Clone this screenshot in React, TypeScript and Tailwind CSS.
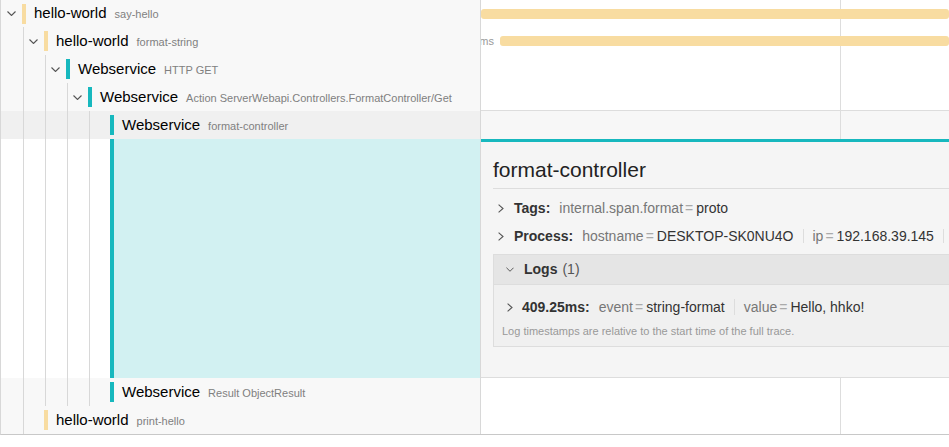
import React from "react";

type SpanRow = {
  depth: number;
  service: string;
  operation: string;
  accent: string;
  hasChildren: boolean;
  selected?: boolean;
  height?: string;
  bar?: { offset: number; label?: string };
};

const spans: SpanRow[] = [
  { depth: 0, service: "hello-world", operation: "say-hello", accent: "bg-[#f8dca1]", hasChildren: true, height: "h-[27px]", bar: { offset: 0 } },
  { depth: 1, service: "hello-world", operation: "format-string", accent: "bg-[#f8dca1]", hasChildren: true, bar: { offset: 19, label: "409.37ms" } },
  { depth: 2, service: "Webservice", operation: "HTTP GET", accent: "bg-[#17b8be]", hasChildren: true },
  { depth: 3, service: "Webservice", operation: "Action ServerWebapi.Controllers.FormatController/Get", accent: "bg-[#17b8be]", hasChildren: true },
  { depth: 4, service: "Webservice", operation: "format-controller", accent: "bg-[#17b8be]", hasChildren: false, selected: true },
];

const after: SpanRow[] = [
  { depth: 4, service: "Webservice", operation: "Result ObjectResult", accent: "bg-[#17b8be]", hasChildren: false },
  { depth: 1, service: "hello-world", operation: "print-hello", accent: "bg-[#f8dca1]", hasChildren: false },
];

function ChevronDown({ className = "" }: { className?: string }) {
  return (
    <svg width="9" height="5" viewBox="0 0 9 5" className={`shrink-0 ${className}`} aria-hidden="true">
      <polyline points="0.5,0.5 4.5,4.5 8.5,0.5" fill="none" stroke="#555" strokeWidth="1.1" />
    </svg>
  );
}

function ChevronRight() {
  return (
    <svg width="6" height="9" viewBox="0 0 6 9" className="shrink-0" aria-hidden="true">
      <polyline points="0.6,0.6 5,4.5 0.6,8.4" fill="none" stroke="#555" strokeWidth="1.1" />
    </svg>
  );
}

function IndentGuides({ count }: { count: number }) {
  return (
    <>
      {Array.from({ length: count }).map((_, i) => (
        <span key={i} className="flex w-[22px] shrink-0 justify-end self-stretch">
          <span className="w-px bg-[#d8d8d8]" />
        </span>
      ))}
    </>
  );
}

function Row({ span }: { span: SpanRow }) {
  return (
    <div className={`flex ${span.height ?? "h-7"}`}>
      {/* name column */}
      <div
        className={`flex w-[480px] shrink-0 items-center border-r border-[#d8d8d8] pl-px ${
          span.selected ? "bg-[#f0f0f0]" : "bg-[#f8f8f8]"
        }`}
      >
        <IndentGuides count={span.depth} />
        <span className="flex w-5 shrink-0 items-center pl-[5px]">
          {span.hasChildren && <ChevronDown />}
        </span>
        <span className={`h-5 w-1 shrink-0 ${span.accent}`} />
        <span className="ml-2 flex items-baseline whitespace-nowrap">
          <span className="text-[15px] text-black">{span.service}</span>
          <span className="ml-2 text-[11px] text-[#808080]">{span.operation}</span>
        </span>
      </div>

      {/* timeline column */}
      <div
        className={`relative flex flex-1 items-center overflow-hidden ${
          span.selected ? "bg-[#f7f7f7] shadow-[0_-1px_0_#dddddd]" : "bg-white"
        }`}
      >
        <span className="absolute inset-y-0 left-[359px] w-px bg-[#dddddd]" />
        {span.bar && (
          <div
            className="relative h-[10px] flex-1 rounded-[3px] bg-[#f8dca1]"
            style={{ marginLeft: span.bar.offset }}
          >
            {span.bar.label && (
              <span className="absolute right-full top-1/2 mr-[6px] -translate-y-1/2 whitespace-nowrap text-[11px] leading-none text-[#999]">
                {span.bar.label}
              </span>
            )}
          </div>
        )}
      </div>
    </div>
  );
}

function KeyValue({ k, v }: { k: string; v: string }) {
  return (
    <span className="shrink-0 px-[9px]">
      <span className="text-[#777]">{k}</span>
      <span className="ml-[2px] mr-[3px] text-[#aaa]">=</span>
      <span className="text-[#333]">{v}</span>
    </span>
  );
}

function Divider({ h = "h-[14px]" }: { h?: string }) {
  return <span className={`w-px shrink-0 bg-[#dddddd] ${h}`} />;
}

function SpanDetail() {
  return (
    <div className="flex h-[239px]">
      <div className="flex w-[480px] shrink-0 border-r border-[#d8d8d8] bg-white pl-px">
        <IndentGuides count={4} />
        <span className="w-5 shrink-0" />
        <span className="w-1 shrink-0 bg-[#17b8be]" />
        <span className="flex-1 bg-[#d2f1f2]" />
      </div>

      <div className="min-w-0 flex-1 overflow-hidden border-t-[3px] border-b border-t-[#17b8be] border-b-[#dddddd] bg-[#f5f5f5] pl-3 pt-[15px]">
        <div className="w-[640px] whitespace-nowrap text-[14px]">
          <h2 className="border-b border-[#dddddd] pb-[6px] text-[21px] leading-[25px] text-[#222]">
            format-controller
          </h2>

          <div className="flex flex-col gap-2 pb-2 pt-[9px]">
            <div className="flex h-5 items-center pl-[5px]">
              <ChevronRight />
              <strong className="ml-[10px] shrink-0 font-bold text-[#333]">Tags:</strong>
              <KeyValue k="internal.span.format" v="proto" />
            </div>
            <div className="flex h-5 items-center pl-[5px]">
              <ChevronRight />
              <strong className="ml-[10px] shrink-0 font-bold text-[#333]">Process:</strong>
              <KeyValue k="hostname" v="DESKTOP-SK0NU4O" />
              <Divider />
              <KeyValue k="ip" v="192.168.39.145" />
              <Divider />
              <KeyValue k="jaeger.version" v="CSharp-0.3.7.0" />
            </div>
          </div>

          {/* Logs */}
          <div className="border border-[#dddddd]">
            <div className="flex h-[30px] items-center border-b border-[#dddddd] bg-[#e5e5e5] pl-3">
              <ChevronDown className="w-[8px]" />
              <strong className="ml-[10px] font-bold text-[#333]">Logs</strong>
              <span className="ml-[5px] text-[#555]">(1)</span>
            </div>
            <div className="bg-[#f0f0f0] pb-[7px] pl-2 pt-3">
              <div className="flex h-5 items-center pl-[5px]">
                <ChevronRight />
                <strong className="ml-[9px] shrink-0 font-bold text-[#333]">409.25ms:</strong>
                <KeyValue k="event" v="string-format" />
                <Divider h="h-[16px]" />
                <KeyValue k="value" v="Hello, hhko!" />
              </div>
              <p className="mt-[6px] text-[11px] leading-4 text-[#999]">
                Log timestamps are relative to the start time of the full trace.
              </p>
            </div>
          </div>
        </div>
      </div>
    </div>
  );
}

export default function App() {
  return (
    <div className="h-[447px] w-[949px] overflow-hidden bg-white font-['Liberation_Sans',Arial,sans-serif]">
      <div className="border-b border-l border-[#c8c8c8] border-l-[#d8d8d8]">
        {spans.map((s, i) => (
          <Row key={i} span={s} />
        ))}
        <SpanDetail />
        {after.map((s, i) => (
          <Row key={i} span={s} />
        ))}
      </div>
    </div>
  );
}
